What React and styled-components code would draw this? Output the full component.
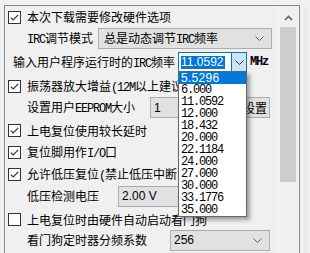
import React from "react";
import styled, { createGlobalStyle } from "styled-components";

const GlobalStyle = createGlobalStyle`
  html, body {
    margin: 0;
    padding: 0;
    background: #f0f0f0;
  }
  body {
    font-family: "Noto Sans CJK SC", "Noto Sans", sans-serif;
    font-size: 12px;
    color: #000;
  }
`;

const frequencies = [
  "5.5296",
  "6.000",
  "11.0592",
  "12.000",
  "18.432",
  "20.000",
  "22.1184",
  "24.000",
  "27.000",
  "30.000",
  "33.1776",
  "35.000",
];

const Check = ({ checked }) => (
  <CheckBox width="13" height="13" viewBox="0 0 13 13">
    <rect x="0.5" y="0.5" width="12" height="12" fill="#fff" stroke="#333" />
    {checked && (
      <polyline
        points="2.8,6.6 5.2,9 10.2,3.8"
        fill="none"
        stroke="#333"
        strokeWidth="1.2"
      />
    )}
  </CheckBox>
);

const Chevron = ({ color = "#606060" }) => (
  <svg width="9" height="5" viewBox="0 0 9 5">
    <polyline points="0.5,0.5 4.5,4.5 8.5,0.5" fill="none" stroke={color} />
  </svg>
);

const Select = ({ value, width, wide }) => (
  <SelectBox $w={width}>
    <SelectText $wide={wide}>{value}</SelectText>
    <Chevron />
  </SelectBox>
);

const App = () => {
  return (
    <>
      <GlobalStyle />
      <Screen>
        <Panel>
          <Content>
            <Row $h={22} $indent={3}>
              <Check checked />
              <Label>本次下载需要修改硬件选项</Label>
            </Row>
            <Row $h={20} $indent={22}>
              <Label $w={71}>
                <Half>IRC</Half>调节模式
              </Label>
              <Select value={<>总是动态调节<Half>IRC</Half>频率</>} width={174} />
            </Row>
            <Row $h={28} $indent={8}>
              <Label $w={165}>
                输入用户程序运行时的<Half>IRC</Half>频率
              </Label>
              <Combo>
                <EditText>
                  <Selected>11.0592</Selected>
                </EditText>
                <DropButton>
                  <Chevron color="#333" />
                </DropButton>
                <DropList>
                  {frequencies.map((f, i) => (
                    <Option key={f} $active={i === 0}>
                      {f}
                    </Option>
                  ))}
                </DropList>
              </Combo>
              <Unit>MHz</Unit>
            </Row>
            <Row $h={20} $indent={3}>
              <Check checked />
              <Label>
                振荡器放大增益<Half>(12M</Half>以上建议选择<Half>)</Half>
              </Label>
            </Row>
            <Row $h={23} $indent={22}>
              <Label $w={123}>
                设置用户<Half>EEPROM</Half>大小
              </Label>
              <Select value="1" width={86} wide />
              <Button>设置</Button>
            </Row>
            <Row $h={23} $indent={3}>
              <Check checked />
              <Label>上电复位使用较长延时</Label>
            </Row>
            <Row $h={21} $indent={3}>
              <Check checked />
              <Label>
                复位脚用作<Half>I/O</Half>口
              </Label>
            </Row>
            <Row $h={23} $indent={3}>
              <Check checked />
              <Label>
                允许低压复位<Half>(</Half>禁止低压中断<Half>)</Half>
              </Label>
            </Row>
            <Row $h={20} $indent={22}>
              <Label $w={91}>低压检测电压</Label>
              <Select value="2.00 V" width={100} wide />
            </Row>
            <Row $h={27} $indent={3}>
              <Check />
              <Label>上电复位时由硬件自动启动看门狗</Label>
            </Row>
            <Row $h={14} $indent={22}>
              <Label $w={143}>看门狗定时器分频系数</Label>
              <Select value="256" width={100} wide />
            </Row>
          </Content>
          <Scrollbar>
            <ArrowUp>
              <svg width="9" height="6" viewBox="0 0 9 6">
                <polyline
                  points="1,5 4.5,1.5 8,5"
                  fill="none"
                  stroke="#606060"
                  strokeWidth="1.6"
                />
              </svg>
            </ArrowUp>
            <Thumb />
          </Scrollbar>
        </Panel>
        <Side />
      </Screen>
    </>
  );
};

export default App;

const Screen = styled.div`
  width: 310px;
  height: 253px;
  overflow: hidden;
  display: flex;
  padding: 5px 0 0 4px;
  box-sizing: border-box;
`;

const Panel = styled.div`
  width: 296px;
  height: 270px;
  flex-shrink: 0;
  box-sizing: border-box;
  border: 1px solid #828790;
  display: flex;
  background: #f0f0f0;
`;

const Content = styled.div`
  flex: 1;
  display: flex;
  flex-direction: column;
`;

const Row = styled.div`
  display: flex;
  align-items: center;
  height: ${(p) => p.$h}px;
  padding-left: ${(p) => p.$indent}px;
  white-space: nowrap;
  flex-shrink: 0;
`;

const CheckBox = styled.svg`
  flex-shrink: 0;
  margin-right: 6px;
`;

const Label = styled.span`
  display: inline-block;
  width: ${(p) => (p.$w ? `${p.$w}px` : "auto")};
  flex-shrink: 0;
  line-height: 14px;
`;

const Half = styled.span`
  font-family: "Liberation Mono", monospace;
  font-size: 12px;
  line-height: 12px;
  letter-spacing: -1.2px;
`;

const SelectBox = styled.div`
  width: ${(p) => p.$w}px;
  height: 21px;
  flex-shrink: 0;
  box-sizing: border-box;
  border: 1px solid #adadad;
  background: #e1e1e1;
  display: flex;
  align-items: center;
  justify-content: space-between;
  padding: 0 7px 0 ${(p) => (p.$w > 150 ? 5 : 3)}px;
`;

const SelectText = styled.span`
  font-family: ${(p) =>
    p.$wide
      ? `"Liberation Sans", sans-serif`
      : `"Noto Sans CJK SC", sans-serif`};
  line-height: 14px;
`;

const Combo = styled.div`
  position: relative;
  width: 69px;
  height: 20px;
  box-sizing: border-box;
  border: 1px solid #0078d7;
  background: #fff;
  display: flex;
  align-items: stretch;
`;

const EditText = styled.div`
  flex: 1;
  display: flex;
  align-items: center;
  padding-left: 2px;
`;

const Selected = styled.span`
  background: #0078d7;
  color: #fff;
  font-family: "Liberation Sans", sans-serif;
  font-size: 12px;
  line-height: 13px;
  padding: 0 1px 0 0;
`;

const DropButton = styled.div`
  width: 14px;
  border-left: 1px solid #0078d7;
  background: #cce4f7;
  display: flex;
  align-items: center;
  justify-content: center;
`;

const DropList = styled.div`
  position: absolute;
  left: -1px;
  top: 100%;
  width: 69px;
  box-sizing: border-box;
  border: 1px solid #646464;
  background: #fff;
  box-shadow: 3px 3px 4px rgba(0, 0, 0, 0.35);
  z-index: 10;
`;

const Option = styled.div`
  height: 12px;
  line-height: 12px;
  padding-left: 2px;
  overflow: hidden;
  background: ${(p) => (p.$active ? "#0078d7" : "transparent")};
  color: ${(p) => (p.$active ? "#fff" : "#000")};
  font-family: ${(p) =>
    p.$active ? `"Liberation Sans", sans-serif` : `"Liberation Mono", monospace`};
  font-size: 12px;
  letter-spacing: ${(p) => (p.$active ? 0.3 : -1.2)}px;
`;

const Unit = styled.span`
  margin-left: 3px;
  font-family: "Liberation Mono", monospace;
  font-size: 12px;
  letter-spacing: -1.2px;
  font-weight: bold;
`;

const Button = styled.div`
  width: 30px;
  height: 21px;
  margin-left: 4px;
  box-sizing: border-box;
  border: 1px solid #adadad;
  background: #e1e1e1;
  display: flex;
  align-items: center;
  justify-content: center;
  line-height: 14px;
`;

const Scrollbar = styled.div`
  width: 21px;
  flex-shrink: 0;
  display: flex;
  flex-direction: column;
  padding-left: 1px;
  box-sizing: border-box;
  background: #f0f0f0;
  border-left: 1px solid #fafafa;
`;

const ArrowUp = styled.div`
  width: 16px;
  height: 21px;
  padding-top: 3px;
  box-sizing: border-box;
  display: flex;
  align-items: center;
  justify-content: center;
`;

const Thumb = styled.div`
  width: 16px;
  height: 155px;
  background: #cdcdcd;
`;

const Side = styled.div`
  flex: 1;
  border-right: 4px solid #f0f0f0;
  box-shadow: inset -1px 0 0 #e2e2e2;
`;
